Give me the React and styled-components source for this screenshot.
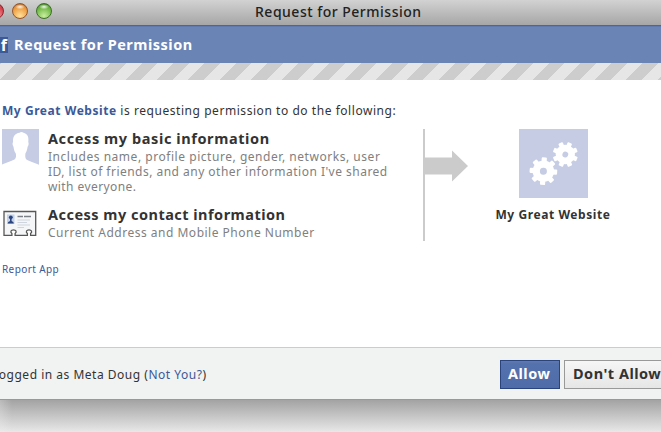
import styled, { createGlobalStyle } from "styled-components";

const App = () => {
    return (
        <>
            <GlobalStyle />
            <Window>
                <TitleBar>
                    <Lights>
                        <Light $edge="#8e2630" $mid="#d8434c" $glow="#f5a3a5" />
                        <Light $edge="#96552a" $mid="#ec9a3c" $glow="#ffe09a" />
                        <Light $edge="#3c7026" $mid="#6cb542" $glow="#c9ee9e" />
                    </Lights>
                    <WindowTitle>Request for Permission</WindowTitle>
                </TitleBar>
                <DialogHeader>
                    <Logo>f</Logo>
                    <h1>Request for Permission</h1>
                </DialogHeader>
                <Stripes />
                <Body>
                    <Intro>
                        <AppLink>My Great Website</AppLink> is requesting permission to do the following:
                    </Intro>
                    <Columns>
                        <Permissions>
                            <Permission>
                                <ProfileIcon />
                                <PermissionText>
                                    <Heading $spacing="0.59px">Access my basic information</Heading>
                                    <Line $spacing="0.54px">Includes name, profile picture, gender, networks, user</Line>
                                    <Line $spacing="0.48px">ID, list of friends, and any other information I've shared</Line>
                                    <Line $spacing="0.42px">with everyone.</Line>
                                </PermissionText>
                            </Permission>
                            <Permission>
                                <ContactIcon />
                                <PermissionText>
                                    <Heading $spacing="0.48px">Access my contact information</Heading>
                                    <Line $spacing="0.5px">Current Address and Mobile Phone Number</Line>
                                </PermissionText>
                            </Permission>
                        </Permissions>
                        <Divider>
                            <ArrowIcon />
                        </Divider>
                        <Site>
                            <GearsIcon />
                            <SiteName>My Great Website</SiteName>
                        </Site>
                    </Columns>
                    <ReportLink>Report App</ReportLink>
                </Body>
                <Footer>
                    <Account>
                        Logged in as Meta Doug (<span>Not You?</span>)
                    </Account>
                    <Buttons>
                        <AllowButton>Allow</AllowButton>
                        <DenyButton>Don't Allow</DenyButton>
                    </Buttons>
                </Footer>
            </Window>
            <Shadow />
        </>
    );
};

const ProfileIcon = () => (
    <svg width="37" height="37" viewBox="0 0 37 37">
        <rect width="37" height="37" fill="#c5cce4" />
        <path
            d="M0 37V35.5C4 33.5 9 32.5 12.5 30.5C14.3 29 14.2 26.5 13.8 24.5C12.3 22.5 11.8 20 11.4 17.5C10.3 16 10.4 14 11 13C10.6 7.5 13 4.2 17.5 3.7C18.5 2.6 20.5 2.6 21.5 3.8C25.5 4.8 27 8 26.3 13C27 14.5 26.6 16.5 25.6 17.8C25.2 20.5 24.6 22.8 23.4 24.5C23.2 27 23 29.5 24.7 30.7C28 32.7 33 33.7 37 35.8V37Z"
            fill="#fff"
        />
    </svg>
);

const ContactIcon = () => (
    <svg width="37" height="37" viewBox="0 0 37 37">
        <path
            d="M2 6.5H33.7V30.3H28.6V28.5C30.6 27 29.5 24.8 27 24.8S23.4 27 25.4 28.5V30.3H13.1V28.5C15.1 27 14 24.8 11.5 24.8S7.9 27 9.9 28.5V30.3H2Z"
            fill="#f5f6f7"
            stroke="#575757"
            strokeWidth="1.3"
        />
        <rect x="5" y="9.5" width="7.5" height="9.5" fill="#c5d1eb" />
        <circle cx="8.8" cy="12.3" r="1.9" fill="#29447f" />
        <path d="M5.8 18.5C5.8 16.8 7.2 16.6 8 16V14H9.6V16C10.4 16.6 11.8 16.8 11.8 18.5Z" fill="#29447f" />
        <path d="M15.5 11.5H21M22 11.5H29" stroke="#7b8088" strokeWidth="1.3" />
        <path d="M15.5 15H28M15.5 17.5H25M15.5 20H28M15.5 22.5H22" stroke="#cfd5dd" strokeWidth="1" />
    </svg>
);

const ArrowIcon = () => (
    <svg width="43" height="32" viewBox="0 0 43 32">
        <path d="M0 7.5H27V0.5L43 16L27 31.5V24.5H0Z" fill="#cbcbcb" />
    </svg>
);

const teeth = [0, 45, 90, 135, 180, 225, 270, 315];

const Gear = ({ x, y, size, turn, hole }) => (
    <g transform={`translate(${x} ${y}) rotate(${turn}) scale(${size})`}>
        <circle r="10.7" fill="#fff" />
        {teeth.map((angle) => (
            <rect key={angle} x="-2.6" y="-13.8" width="5.2" height="6" rx="1" fill="#fff" transform={`rotate(${angle})`} />
        ))}
        <circle r={hole} fill="#c5cce4" />
    </g>
);

const GearsIcon = () => (
    <svg width="69" height="69" viewBox="0 0 69 69">
        <rect width="69" height="69" fill="#c5cce4" />
        <Gear x={24.4} y={42.2} size={1} turn={4} hole={3.5} />
        <Gear x={46.3} y={25.5} size={0.91} turn={22} hole={3.2} />
    </svg>
);

const GlobalStyle = createGlobalStyle`
    body {
        margin: 0;
        width: 661px;
        height: 432px;
        overflow: hidden;
        background: #f0f0f0;
        font-family: "Noto Sans", "Open Sans", sans-serif;
        font-size: 12px;
        color: #333;
    }
    h1, h2, p {
        margin: 0;
    }
    svg {
        display: block;
        flex: none;
    }
`;

const Window = styled.div`
    display: flex;
    flex-direction: column;
    height: 400px;
    background: #fff;
    white-space: nowrap;
`;

const TitleBar = styled.div`
    display: grid;
    grid-template-columns: 255px 1fr;
    height: 26px;
    box-sizing: border-box;
    background: linear-gradient(#d2d2d2, #a6a6a6);
    border-bottom: 1px solid #5c6475;
`;

const Lights = styled.div`
    display: flex;
    gap: 8px;
    margin: 3px 0 0 -12px;
`;

const Light = styled.span`
    width: 16px;
    height: 16px;
    box-sizing: border-box;
    border: 1px solid ${(props) => props.$edge};
    border-radius: 50%;
    background:
        radial-gradient(ellipse 5px 2.5px at 50% 20%, rgba(255,255,255,0.9), transparent),
        radial-gradient(circle at 50% 85%, ${(props) => props.$glow}, ${(props) => props.$mid} 65%, ${(props) => props.$edge});
`;

const WindowTitle = styled.div`
    font-size: 14px;
    line-height: 24px;
    font-weight: 500;
    letter-spacing: 0.5px;
    color: #222;
`;

const DialogHeader = styled.div`
    display: flex;
    align-items: center;
    height: 37px;
    background: #6b84b6;
    box-sizing: border-box;
    border-top: 1px solid #607aad;
    h1 {
        margin-left: 6px;
        padding-bottom: 2px;
        font-size: 14.5px;
        line-height: 18px;
        font-weight: 700;
        letter-spacing: 0.5px;
        color: #fff;
    }
`;

const Logo = styled.span`
    width: 16px;
    height: 16px;
    margin-left: -8px;
    padding-right: 1px;
    box-sizing: border-box;
    background: #3d5a96;
    color: #fff;
    font-size: 16px;
    line-height: 17px;
    font-weight: 700;
    text-align: right;
`;

const Stripes = styled.div`
    height: 17px;
    background: repeating-linear-gradient(135deg, #cdcdcd 0 1px, #e6e6e6 1px 12px, #cdcdcd 12px 22.13px);
`;

const Body = styled.div`
    flex: 1;
    padding: 21px 0 0 2px;
`;

const Intro = styled.div`
    font-size: 12px;
    line-height: 20px;
    letter-spacing: 0.55px;
`;

const AppLink = styled.span`
    font-weight: 700;
    color: #3b5998;
`;

const Columns = styled.div`
    display: grid;
    grid-template-columns: 421px 60px 1fr;
    margin-top: 8px;
`;

const Permissions = styled.div`
    display: flex;
    flex-direction: column;
    gap: 11px;
`;

const Permission = styled.div`
    display: flex;
    gap: 9px;
`;

const PermissionText = styled.div`
    display: flex;
    flex-direction: column;
`;

const Heading = styled.h2`
    padding-bottom: 2px;
    font-size: 14.5px;
    line-height: 18px;
    font-weight: 700;
    letter-spacing: ${(props) => props.$spacing};
    color: #333;
`;

const Line = styled.p`
    font-size: 12px;
    line-height: 15px;
    letter-spacing: ${(props) => props.$spacing};
    color: #808080;
`;

const Divider = styled.div`
    height: 112px;
    padding-top: 21px;
    box-sizing: border-box;
    border-left: 2px solid #cbcbcb;
`;

const Site = styled.div`
    display: flex;
    flex-direction: column;
    align-items: center;
    width: 140px;
`;

const SiteName = styled.div`
    margin-top: 7px;
    font-size: 12px;
    line-height: 20px;
    font-weight: 700;
    letter-spacing: 0.58px;
`;

const ReportLink = styled.div`
    margin-top: 19px;
    font-size: 10px;
    line-height: 16px;
    letter-spacing: 0.4px;
    color: #3b5998;
`;

const Footer = styled.div`
    display: flex;
    justify-content: space-between;
    height: 53px;
    box-sizing: border-box;
    background: #f1f2f2;
    border-top: 1px solid #ccc;
    border-bottom: 1px solid #999;
`;

const Account = styled.div`
    margin-left: -8px;
    font-size: 12px;
    line-height: 53px;
    letter-spacing: 0.51px;
    span {
        color: #3b5998;
    }
`;

const Buttons = styled.div`
    display: flex;
    gap: 4px;
    width: 161px;
    padding-top: 12px;
`;

const Button = styled.button`
    flex: none;
    height: 29px;
    padding: 0 0 3px 8px;
    font-family: inherit;
    font-size: 14.5px;
    line-height: 20px;
    font-weight: 700;
    letter-spacing: 0.5px;
    text-align: left;
    white-space: nowrap;
`;

const AllowButton = styled(Button)`
    width: 60px;
    border: 1px solid #29447e;
    padding-left: 7px;
    background: linear-gradient(#637bad, #5472ae 10%, #4f6ca8);
    color: #fff;
`;

const DenyButton = styled(Button)`
    width: 106px;
    border: 1px solid #999;
    background: linear-gradient(#f6f6f6, #e6e6e6);
    color: #333;
`;

const Shadow = styled.div`
    height: 32px;
    background:
        linear-gradient(90deg, rgba(240,240,240,0.3), transparent 12px),
        linear-gradient(#a3a3a3, #e8e8e8);
`;

export default App;
